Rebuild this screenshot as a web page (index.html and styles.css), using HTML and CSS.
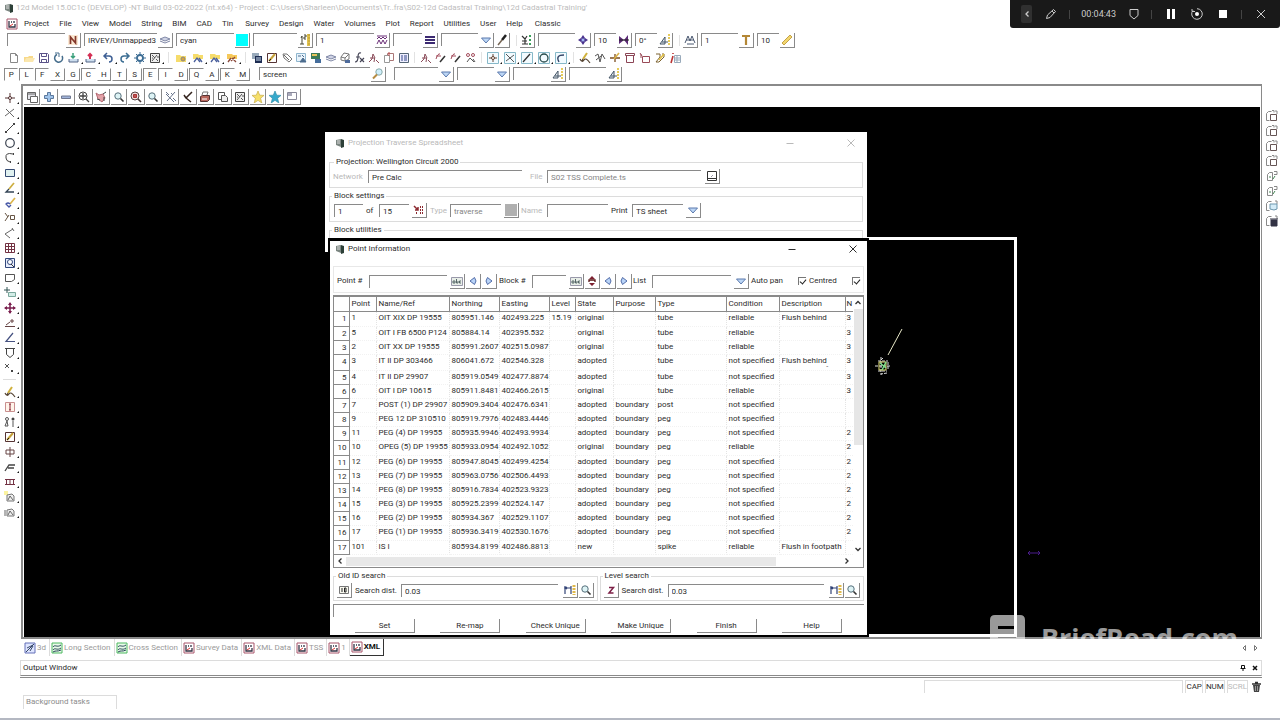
FILE: index.html
```html
<!DOCTYPE html>
<html lang="en">
<head>
  <meta charset="UTF-8" />
  <meta name="viewport" content="width=device-width, initial-scale=1.0" />
  <title>12d Model</title>
  <link rel="stylesheet" href="styles.css">
</head>
<body>

  <!-- icon sprite -->
  <svg class="sprite" aria-hidden="true">
    <symbol id="app" viewBox="0 0 12 12"><path d="M2 3l5-1v8l-5-2z" fill="#7a8580"/><path d="M7 2l3 1v7l-3 1z" fill="#2d4038"/><path d="M3 4l3 0M3 6h3" stroke="#ddd"/></symbol>
    <symbol id="plan" viewBox="0 0 12 12"><path d="M1 1h10v10H1z" fill="#fff" stroke="#a8556b"/><path d="M3 3v6h6V6M5 4h1M8 3v2" fill="none" stroke="#334" stroke-width="1.3"/><path d="M4 8l3-2" stroke="#d33"/></symbol>
    <symbol id="section" viewBox="0 0 12 12"><path d="M1 1h10v10H1z" fill="#e9fbe9" stroke="#4cb860"/><path d="M2 5c2-3 4 1 8-2M2 8c2-3 4 1 8-2M2 10c3-2 4 0 8-2" fill="none" stroke="#245" stroke-width="1"/></symbol>
    <symbol id="threed" viewBox="0 0 12 12"><path d="M1 1h10v10H1z" fill="#dfe6ff" stroke="#6470b8"/><path d="M2 10l8-8M3 6l6-3M6 9l3-5" stroke="#346"/></symbol>
    <symbol id="new" viewBox="0 0 12 12"><path d="M2.500 1.500h5l2 2v7h-7z" fill="#fff" stroke="#888"/><path d="M7.500 1.500v2h2" fill="none" stroke="#888"/></symbol>
    <symbol id="open" viewBox="0 0 12 12"><path d="M1 5h4l1-1h4v6H1z" fill="#f7d98a"/><path d="M1 10l2-4h9l-2 4z" fill="#fbe7ae"/></symbol>
    <symbol id="save" viewBox="0 0 12 12"><path d="M1.500 1.500h8l1 1v8h-9z" fill="#fff" stroke="#5a5288"/><path d="M3.500 1.500v3h5v-3M3.500 10.500v-3h5v3" fill="none" stroke="#5a5288"/></symbol>
    <symbol id="refresh" viewBox="0 0 12 12"><path d="M4 2.500a4 4 0 1 0 5 1.500" fill="none" stroke="#456d8c" stroke-width="1.500"/><path d="M2 1h4v4" fill="none" stroke="#456d8c"/></symbol>
    <symbol id="import" viewBox="0 0 12 12"><path d="M5 1v5M3 4l2 2 2-2" fill="none" stroke="#3ba07c" stroke-width="1.500"/><path d="M1 7v3h9V7" fill="#cde" stroke="#568"/></symbol>
    <symbol id="export" viewBox="0 0 12 12"><path d="M5 7V2M3 4l2-2 2 2" fill="none" stroke="#d42f55" stroke-width="2"/><path d="M1 7v3h9V7" fill="#cde" stroke="#568"/></symbol>
    <symbol id="undo" viewBox="0 0 12 12"><path d="M2 4h5q3 0 3 3t-3 3M5 1L2 4l3 3" fill="none" stroke="#3d5f94" stroke-width="1.500"/></symbol>
    <symbol id="redo" viewBox="0 0 12 12"><path d="M10 4H5Q2 4 2 7t3 3M7 1l3 3-3 3" fill="none" stroke="#3d6f94" stroke-width="1.500"/></symbol>
    <symbol id="gear" viewBox="0 0 12 12"><circle cx="6" cy="6" r="3" fill="none" stroke="#3d6d94" stroke-width="1.800"/><path d="M6 0v3M6 9v3M0 6h3M9 6h3M2 2l2 2M8 8l2 2M10 2L8 4M4 8l-2 2" stroke="#3d6d94"/></symbol>
    <symbol id="image" viewBox="0 0 12 12"><path d="M1.500 1.500h9v9h-9z" fill="#eee" stroke="#444"/><path d="M3 3l3 3M8 3L3 9M7 7l2 2M8 5h2M3 6h1" stroke="#555"/></symbol>
    <symbol id="folder" viewBox="0 0 12 12"><path d="M1 3h4l1 1h5v6H1z" fill="#f6dc6b"/><circle cx="8" cy="7" r="2" fill="#d9a33c" stroke="#888"/></symbol>
    <symbol id="folderx" viewBox="0 0 12 12"><path d="M1 2h5l1 1h4v4H1z" fill="#f6dc6b"/><path d="M2 10l3-4 3 4M7 6l3 4" fill="none" stroke="#4a5f9c" stroke-width="1.300"/></symbol>
    <symbol id="foldery" viewBox="0 0 12 12"><path d="M1 2h5l1 1h4v4H1z" fill="#f6c95b"/><path d="M2 10l3-4M6 6l4 4M5 9l4-4" stroke="#8b4a3c" stroke-width="1.300"/></symbol>
    <symbol id="panel" viewBox="0 0 12 12"><path d="M1 1h7v6H1z" fill="#9ab"/><path d="M4 4h7v7H4z" fill="#1d2c52"/><path d="M5 6h5M5 8h5" stroke="#cde"/></symbol>
    <symbol id="note" viewBox="0 0 12 12"><path d="M1.500 1.500h9v9h-9z" fill="#fff" stroke="#533"/><path d="M3 9l6-7" stroke="#c5a13a" stroke-width="2"/><path d="M3 9l2-2" stroke="#222"/></symbol>
    <symbol id="tag" viewBox="0 0 12 12"><path d="M2 2l4 0 5 5-3 3-5-4z" fill="#fff" stroke="#777"/><path d="M3 3l5 5" stroke="#666"/></symbol>
    <symbol id="mapa" viewBox="0 0 12 12"><path d="M1.500 1.500h9v8h-9z" fill="#e8f3fb" stroke="#8fb6cf"/><path d="M3 4h3M7 3l2 2M5 10l3-4 3 4z" fill="#4d6c8e" stroke="#4d6c8e"/></symbol>
    <symbol id="mapb" viewBox="0 0 12 12"><path d="M1 1h9v6H1z" fill="#3c7b58"/><path d="M2 3h5" stroke="#e8c45a" stroke-width="2"/><path d="M5 7h6v4H5z" fill="#456d9c"/></symbol>
    <symbol id="layers" viewBox="0 0 12 12"><path d="M1 5l5-2 5 2-5 2z" fill="#d0d4e6" stroke="#8088a6"/><path d="M1 7l5 2 5-2" fill="none" stroke="#8088a6"/></symbol>
    <symbol id="cubes" viewBox="0 0 12 12"><path d="M2 5l3-4 5 1v5l-4 2-4-1z" fill="#fff" stroke="#777"/><path d="M2 5l4 1 4-4M6 6v3" stroke="#777" fill="none"/><path d="M6 8h5v3H6z" fill="#4f6c9c"/></symbol>
    <symbol id="fx" viewBox="0 0 12 12"><path d="M7 1q-3-1-3 4t-3 5M2 5h4M6 6l4 4M10 6l-4 4" fill="none" stroke="#445" stroke-width="1.200"/></symbol>
    <symbol id="fr" viewBox="0 0 12 12"><path d="M1 10Q5 8 5 2q3 3 1 8M2 6h5M8 8l3 3" fill="none" stroke="#8a4a58"/></symbol>
    <symbol id="frpen" viewBox="0 0 12 12"><path d="M1 7q2-6 4-5M1 4h5" fill="none" stroke="#a34c5c"/><path d="M5 10l5-6" stroke="#333" stroke-width="1.500"/></symbol>
    <symbol id="glasses" viewBox="0 0 12 12"><circle cx="3" cy="3" r="1.500" fill="none" stroke="#a34c5c"/><circle cx="8" cy="3" r="1.500" fill="none" stroke="#a34c5c"/><path d="M2 10l3-4 4 4M8 7l2 3" fill="none" stroke="#555"/></symbol>
    <symbol id="copy" viewBox="0 0 12 12"><path d="M4.500 1.500h6v7h-6z" fill="#fff" stroke="#a77"/><path d="M1.500 3.500h5v7h-5z" fill="#fff" stroke="#999"/><path d="M6 0v4" stroke="#b44"/></symbol>
    <symbol id="list" viewBox="0 0 12 12"><path d="M1.500 1.500h9v9h-9z" fill="#eef" stroke="#567"/><path d="M3 4h2M6 4h3M3 6h2M6 6h3M3 8h2M6 8h3" stroke="#348"/></symbol>
    <symbol id="ptbox" viewBox="0 0 12 12"><path d="M.5.5h11v11H.5z" fill="#f3fbff" stroke="#86b8c8"/><path d="M6 2v8M2 6h8" stroke="#643"/><circle cx="6" cy="6" r="1.500" fill="#fff" stroke="#643"/></symbol>
    <symbol id="xbox" viewBox="0 0 12 12"><path d="M.5.5h11v11H.5z" fill="#f3fbff" stroke="#86b8c8"/><path d="M2 2l8 8M2 9l8-6" stroke="#555"/></symbol>
    <symbol id="linebox" viewBox="0 0 12 12"><path d="M.5.5h11v11H.5z" fill="#f3fbff" stroke="#86b8c8"/><path d="M2 10l7-8" stroke="#333" stroke-width="1.300"/></symbol>
    <symbol id="circbox" viewBox="0 0 12 12"><path d="M.5.5h11v11H.5z" fill="#f3fbff" stroke="#86b8c8"/><circle cx="6" cy="6" r="4" fill="none" stroke="#264a4a" stroke-width="1.300"/></symbol>
    <symbol id="arcbox" viewBox="0 0 12 12"><path d="M.5.5h11v11H.5z" fill="#f3fbff" stroke="#86b8c8"/><path d="M4 10Q0 3 9 3" fill="none" stroke="#346" stroke-width="1.300"/></symbol>
    <symbol id="pencil" viewBox="0 0 12 12"><path d="M8 1L4 7" stroke="#d0b13c" stroke-width="2"/><path d="M1 7q2 4 4 1t6 3M4 7l-1 2" fill="none" stroke="#543" stroke-width="1.200"/></symbol>
    <symbol id="peaks" viewBox="0 0 12 12"><path d="M1 4l3-2 2 8 2-8 3 5M2 8l5-4" fill="none" stroke="#555"/></symbol>
    <symbol id="spark" viewBox="0 0 12 12"><path d="M6 2v8M1 6h10" stroke="#7a4c20" stroke-width="1.300"/><path d="M10 1L5 7" stroke="#dcb347" stroke-width="1.600"/></symbol>
    <symbol id="bin" viewBox="0 0 12 12"><path d="M1.500 1.500h9v2h-9zM2.500 3.500h7v7h-7z" fill="#fff" stroke="#8b4455"/></symbol>
    <symbol id="boxb" viewBox="0 0 12 12"><path d="M3.500 4.500h7v6h-7zM3 4L1 1M2 6V2" fill="#fff" stroke="#9a4b58"/></symbol>
    <symbol id="chain" viewBox="0 0 12 12"><path d="M2 2h4v3L2 10h3l5-5V2H8" fill="none" stroke="#7c6230"/><path d="M10 2L5 8" stroke="#e2bf3e" stroke-width="1.500"/></symbol>
    <symbol id="italic" viewBox="0 0 12 12"><path d="M4 1v1M4 4L2 11" stroke="#b33" stroke-width="1.600"/><path d="M5.500 3.500h6v7h-6zM5 6h6M5 8h6M8 3v8" fill="none" stroke="#9ab"/></symbol>
    <symbol id="ruler" viewBox="0 0 12 12"><path d="M9.500 0v12" stroke="#e0c24e" stroke-width="3"/><path d="M9 1h2M9 4h2M9 7h2M9 10h2" stroke="#b93"/><path d="M2 4l1-2v8M1 10h4M5 1h2v2H5v2h2" fill="none" stroke="#443"/></symbol>
    <symbol id="angle" viewBox="0 0 12 12"><path d="M10 0v12" stroke="#e6cb5a" stroke-width="2" stroke-dasharray="2 1"/><path d="M1 10l5-7v7zM3 8h6" fill="#e3e9ee" stroke="#456"/></symbol>
    <symbol id="measure" viewBox="0 0 12 12"><path d="M10 1v10" stroke="#e0b94b" stroke-width="3" stroke-dasharray="2 1"/><path d="M1 2v8M1 4h6M7 2v8M3 3L1 4l2 1" fill="none" stroke="#347" stroke-width="1.200"/></symbol>
    <symbol id="zigzag" viewBox="0 0 12 12"><path d="M1 2h10M1 5l2-2 2 2 2-2 2 2 2-2M1 10l2-4 2 4 2-4 2 4 2-4" fill="none" stroke="#6b2f78"/></symbol>
    <symbol id="lines" viewBox="0 0 12 12"><path d="M1 3h10M1 6h10M1 9h10" stroke="#3c2a72" stroke-width="2"/></symbol>
    <symbol id="down" viewBox="0 0 12 12"><path d="M1.500 4h9L6 9z" fill="#bcd6f5" stroke="#5b79ad"/></symbol>
    <symbol id="brush" viewBox="0 0 12 12"><path d="M10 1L6 6" stroke="#222" stroke-width="2.500"/><path d="M6 6l-4 5" stroke="#765" stroke-width="1.500"/></symbol>
    <symbol id="tree" viewBox="0 0 12 12"><path d="M1 2l3 3 2-3M4 5v5M1 10h6M1 7h5" fill="none" stroke="#333" stroke-width="1.200"/><path d="M9 1v2M9 5v2M9 9v2" stroke="#3aa05a" stroke-width="2"/></symbol>
    <symbol id="pin" viewBox="0 0 12 12"><path d="M6 1l2 3H4zM1 6l3-2v4zM11 6L8 4v4zM6 11l2-3H4z" fill="#4c3390"/><circle cx="6" cy="6" r="2" fill="#a2b7f5" stroke="#43308a"/></symbol>
    <symbol id="fan" viewBox="0 0 12 12"><path d="M6 6L1 2v8zM6 6l4-5v10z" fill="#5d2b78"/><path d="M1 6h10" stroke="#222"/></symbol>
    <symbol id="scale" viewBox="0 0 12 12"><path d="M1 9l3-7 2 5 2-5 3 7M2 6h8M3 10h7" fill="none" stroke="#4a5870"/></symbol>
    <symbol id="tee" viewBox="0 0 12 12"><path d="M2 2h8M6 2v9" stroke="#b48735" stroke-width="2.200"/></symbol>
    <symbol id="rule" viewBox="0 0 12 12"><path d="M1 9l8-8 2 2-8 8z" fill="#f2d66d" stroke="#c4a24a"/></symbol>
    <symbol id="n" viewBox="0 0 12 12"><path d="M1 1h10v10H1z" fill="#fbe9d4"/><path d="M3.500 10V3l5 6V2" fill="none" stroke="#84372a" stroke-width="1.700"/></symbol>
    <symbol id="cyan" viewBox="0 0 12 12"><path d="M0 0h12v12H0z" fill="#0ff"/></symbol>
    <symbol id="search" viewBox="0 0 12 12"><circle cx="5" cy="5" r="3.200" fill="#ddf3f5" stroke="#57707c"/><path d="M7.500 7.500l3 3" stroke="#333" stroke-width="1.600"/></symbol>
    <symbol id="find" viewBox="0 0 12 12"><circle cx="7" cy="4" r="3.200" fill="#cfeefa" stroke="#8aa"/><path d="M5 6.500l-4 4" stroke="#b58b42" stroke-width="2"/></symbol>
    <symbol id="windows" viewBox="0 0 12 12"><path d="M1.500 1.500h8v7h-8z" fill="#e4e4ea" stroke="#666"/><path d="M4.500 5.500h7v6h-7z" fill="#fff" stroke="#666"/><path d="M1 3h9" stroke="#666"/></symbol>
    <symbol id="pages" viewBox="0 0 12 12"><path d="M1.500 1.500h6v7h-6z" fill="#fff" stroke="#555"/><path d="M4.500 4.500h4l2 2v4h-6z" fill="#eee" stroke="#555"/></symbol>
    <symbol id="plus" viewBox="0 0 12 12"><path d="M4.500 1.500h3v3h3v3h-3v3h-3v-3h-3v-3h3z" fill="#9fc3ea" stroke="#5b789c"/></symbol>
    <symbol id="minus" viewBox="0 0 12 12"><path d="M1.500 5h9v2.500h-9z" fill="#9fb3da" stroke="#6f7890"/></symbol>
    <symbol id="zoomfit" viewBox="0 0 12 12"><circle cx="5" cy="5" r="4" fill="#fff" stroke="#444"/><path d="M5 2v6M2 5h6M8 8l3 3" stroke="#444" stroke-width="1.300"/></symbol>
    <symbol id="zoomred" viewBox="0 0 12 12"><circle cx="5" cy="5" r="4" fill="#f4dede" stroke="#544"/><path d="M3.500 3.500h3v3h-3z" fill="#b55" stroke="#a33"/><path d="M8 8l3 3" stroke="#433" stroke-width="1.600"/></symbol>
    <symbol id="hand" viewBox="0 0 12 12"><path d="M1 2l3 2 4-1 2 4-3 4-4-3z" fill="#e3a2a8" stroke="#b56a73"/><path d="M8 3l3-2M2 8l3 1M9 6v4" stroke="#444"/></symbol>
    <symbol id="hatch" viewBox="0 0 12 12"><path d="M1 3l8 8M10 1L2 10M1 1l3 3M8 7l3 3M6 2l2 2" stroke="#66728a"/></symbol>
    <symbol id="check" viewBox="0 0 12 12"><path d="M10 1L4 7l5 4M4 7L2 4" fill="none" stroke="#33231d" stroke-width="1.500"/></symbol>
    <symbol id="print" viewBox="0 0 12 12"><path d="M3 4l1-3h5l-1 3" fill="#fff" stroke="#777"/><path d="M1.500 5.500l2-1h7v4l-2 2h-7z" fill="#b8665c" stroke="#533"/><path d="M3 8h5" stroke="#fff"/></symbol>
    <symbol id="star" viewBox="0 0 12 12"><path d="M6 0l1.700 4.200 4.300.2-3.400 2.800L9.800 12 6 9.300 2.200 12l1.200-4.800L0 4.400l4.300-.2z"/></symbol>
    <symbol id="small" viewBox="0 0 12 12"><path d="M1.500 1.500h9v7h-9z" fill="#fff" stroke="#889"/><path d="M2 2h4v3H2z" fill="#aab"/></symbol>
    <symbol id="point" viewBox="0 0 12 12"><path d="M6 1v10M1 6h10" stroke="#533"/><circle cx="6" cy="6" r="1.500" fill="#fff" stroke="#533"/></symbol>
    <symbol id="cross" viewBox="0 0 12 12"><path d="M2 2l8 8M1 9l9-7" stroke="#666"/></symbol>
    <symbol id="seg" viewBox="0 0 12 12"><path d="M2 10l8-8" stroke="#444"/><path d="M1 9h2v2H1zM9 1h2v2H9z" fill="#444"/></symbol>
    <symbol id="circle" viewBox="0 0 12 12"><circle cx="6" cy="6" r="4.300" fill="none" stroke="#3b4350" stroke-width="1.200"/></symbol>
    <symbol id="arc" viewBox="0 0 12 12"><path d="M9 2Q1 0 2 6q0 3 4 4" fill="none" stroke="#444"/><path d="M9 1h1v2H9zM6 9h1v2H6z" fill="#444"/></symbol>
    <symbol id="rect" viewBox="0 0 12 12"><path d="M1.500 2.500h9v7h-9z" fill="#e0f1f0" stroke="#354b73"/></symbol>
    <symbol id="draw" viewBox="0 0 12 12"><path d="M10 1L5 7" stroke="#cdae3f" stroke-width="1.700"/><path d="M5 7l-3 3h8" fill="none" stroke="#345" stroke-width="1.300"/></symbol>
    <symbol id="paint" viewBox="0 0 12 12"><path d="M11 1L6 7" stroke="#dcb54a" stroke-width="1.700"/><path d="M6 7q-2-2-4 0l3 3 2-2" fill="none" stroke="#4657a6" stroke-width="1.300"/></symbol>
    <symbol id="label" viewBox="0 0 12 12"><path d="M1 1l3 4M1 9l4-6M6.500 3.500h4v4h-4z" fill="none" stroke="#654"/></symbol>
    <symbol id="dim" viewBox="0 0 12 12"><path d="M1 7l8-5M1 7l5 4M8 1l2 3" fill="none" stroke="#666"/></symbol>
    <symbol id="grid" viewBox="0 0 12 12"><path d="M1.500 1.500h9v9h-9zM1 4.500h10M1 7.500h10M4.500 1v10M7.500 1v10" fill="#fff" stroke="#733243"/></symbol>
    <symbol id="zoomwin" viewBox="0 0 12 12"><path d="M1.500 1.500h9v9h-9z" fill="#e7edfc" stroke="#33487c"/><circle cx="6" cy="5" r="2.500" fill="#fff" stroke="#33487c"/><path d="M7 7l3 3" stroke="#333"/></symbol>
    <symbol id="poly" viewBox="0 0 12 12"><path d="M1.500 2.500h9v5l-3 2h-6z" fill="#fff" stroke="#555"/></symbol>
    <symbol id="addbox" viewBox="0 0 12 12"><path d="M3 0v6M0 3h6" stroke="#355"/><path d="M4.500 5.500h7v4h-7z" fill="#d3ede7" stroke="#7aa79c"/></symbol>
    <symbol id="move" viewBox="0 0 12 12"><path d="M6 1v10M1 6h10" stroke="#7a1f4e" stroke-width="1.500"/><path d="M6 0l2 3H4zM6 12l2-3H4zM0 6l3-2v4zM12 6L9 4v4z" fill="#7a1f4e"/></symbol>
    <symbol id="slope" viewBox="0 0 12 12"><path d="M1 9.500h10M2 8l4-3M8 2v4M6 4h4" stroke="#644"/></symbol>
    <symbol id="angle2" viewBox="0 0 12 12"><path d="M9 1L2 9.500h9" fill="none" stroke="#455180" stroke-width="1.200"/></symbol>
    <symbol id="tagdown" viewBox="0 0 12 12"><path d="M2.500 1.500h7v6L6 10.500 2.500 7.500z" fill="#fff" stroke="#444"/><path d="M1 1.500h10" stroke="#444"/></symbol>
    <symbol id="nodes" viewBox="0 0 12 12"><path d="M1 2l4 4M5 2L1 6" stroke="#555"/><path d="M7 8h2v2H7z" fill="#444"/></symbol>
    <symbol id="info" viewBox="0 0 12 12"><path d="M1.500 1.500h9v9h-9z" fill="#fff4ea" stroke="#c98f8f"/><path d="M6 3v6M5 3h2M5 9h2" stroke="#823" /></symbol>
    <symbol id="pegs" viewBox="0 0 12 12"><circle cx="3" cy="3" r="1.500" fill="none" stroke="#555"/><circle cx="9" cy="3" r="1.500" fill="#444"/><path d="M3 5L1 10h3zM9 5v6" fill="none" stroke="#555"/></symbol>
    <symbol id="align" viewBox="0 0 12 12"><path d="M6 1v10M2 4h8v4H2z" fill="none" stroke="#644"/></symbol>
    <symbol id="step" viewBox="0 0 12 12"><path d="M1 10l4-6h6M4 7h6" fill="none" stroke="#444" stroke-width="1.300"/></symbol>
    <symbol id="rail" viewBox="0 0 12 12"><path d="M1 3.500h10M1 8.500h10M2.500 3v6M6 3v6M9.500 3v6" stroke="#733243"/></symbol>
    <symbol id="sheet" viewBox="0 0 12 12"><path d="M3 4l5-1 2 2v5H3z" fill="#eee" stroke="#777"/><path d="M4 9l2-4 3 4M1 4v6" fill="none" stroke="#666"/></symbol>
    <symbol id="sheety" viewBox="0 0 12 12"><path d="M0 0h4v4H0z" fill="#fbf3a0"/><path d="M3 4l5-1 2 2v5H3z" fill="#eee" stroke="#777"/><path d="M4 9l2-4 3 4" fill="none" stroke="#666"/></symbol>
    <symbol id="docs" viewBox="0 0 12 12"><path d="M3.500 10.500h-3v-7l2-2h3M6 .5h2v2M9 1h2v3" fill="none" stroke="#888"/><path d="M4.500 4.500h6v6h-6z" fill="#fff" stroke="#655"/></symbol>
    <symbol id="docg" viewBox="0 0 12 12"><path d="M1.500 10.500v-6l2-2h3v8zM8 1.500h3v3H8" fill="none" stroke="#888"/><path d="M3 7h2M9 6l-2 3" stroke="#485"/></symbol>
    <symbol id="docb" viewBox="0 0 12 12"><path d="M3.500 10.500h-3v-7l2-2h3M9 1h2v3" fill="none" stroke="#888"/><path d="M4 4h7v5l-3 1-4-1z" fill="#d4ecf8" stroke="#6d97ae"/></symbol>
    <symbol id="doct" viewBox="0 0 12 12"><path d="M3.500 10.500h-3v-7l2-2h3M9 1h2v3" fill="none" stroke="#888"/><path d="M5 5h6v6H5zM4 4h8" fill="#334" stroke="#334"/></symbol>
    <symbol id="abc" viewBox="0 0 12 12"><path d="M.5 2.500h11v8H.5z" fill="#e8eee8" stroke="#99a"/><path d="M2 8V6h2v2zM5.500 4v4h1.500V6M10 6H8.500v2H10" fill="none" stroke="#566"/></symbol>
    <symbol id="prev" viewBox="0 0 12 12"><path d="M7.500 2.500L3 6l4.500 3.500L9 6z" fill="#b9d4f8" stroke="#526ca8"/></symbol>
    <symbol id="next" viewBox="0 0 12 12"><path d="M4.500 2.500L9 6 4.500 9.500 3 6z" fill="#b9d4f8" stroke="#526ca8"/></symbol>
    <symbol id="spin" viewBox="0 0 12 12"><path d="M6 1l3 3H3zM6 11l3-3H3z" fill="#7d2030"/><path d="M3 7V5h6v2" fill="none" stroke="#511" stroke-width="1.300"/></symbol>
    <symbol id="pick" viewBox="0 0 12 12"><path d="M1 2l4 4M2 6h3V3" fill="none" stroke="#8c2a30" stroke-width="1.500"/><path d="M7 3h3M7 6h3M7 9h3M3 9h2" stroke="#8c2a30" stroke-width="2" stroke-dasharray="1 1"/></symbol>
    <symbol id="disk" viewBox="0 0 12 12"><path d="M1.500 1.500h9v9h-9zM2 8.500h8" fill="#fff" stroke="#333"/><path d="M5 7l2-2" stroke="#99a"/></symbol>
    <symbol id="grey" viewBox="0 0 12 12"><path d="M0 0h12v12H0z" fill="#b0b0b0"/></symbol>
    <symbol id="id" viewBox="0 0 12 12"><path d="M1.500 2.500h9v7h-9z" fill="#fafaf0" stroke="#777"/><path d="M4 4v4M6.500 4v4h1.500V4z" fill="none" stroke="#222"/></symbol>
    <symbol id="z" viewBox="0 0 12 12"><path d="M4 3.500h4.500L4 9h4.500" fill="none" stroke="#7d2047" stroke-width="1.500"/></symbol>
    <symbol id="close" viewBox="0 0 12 12"><path d="M2.500 2.500l7 7M9.500 2.500l-7 7" stroke="currentColor"/></symbol>
    <symbol id="min" viewBox="0 0 12 12"><path d="M2.500 6.500h7" stroke="currentColor"/></symbol>
    <symbol id="left" viewBox="0 0 12 12"><path d="M7.500 3.500L5 6l2.500 2.500" fill="none" stroke="currentColor" stroke-width="1.300"/></symbol>
    <symbol id="right" viewBox="0 0 12 12"><path d="M4.500 3.500L7 6 4.500 8.500" fill="none" stroke="currentColor" stroke-width="1.300"/></symbol>
    <symbol id="up" viewBox="0 0 12 12"><path d="M3.500 7L6 4.500 8.500 7" fill="none" stroke="currentColor" stroke-width="1.300"/></symbol>
    <symbol id="dn" viewBox="0 0 12 12"><path d="M3.500 5L6 7.500 8.500 5" fill="none" stroke="currentColor" stroke-width="1.300"/></symbol>
    <symbol id="tril" viewBox="0 0 12 12"><path d="M7.500 3.500v5L5 6z" fill="none" stroke="#777"/></symbol>
    <symbol id="trir" viewBox="0 0 12 12"><path d="M4.500 3.500v5L7 6z" fill="none" stroke="#777"/></symbol>
    <symbol id="tack" viewBox="0 0 12 12"><path d="M4.500 3.500h3v3h-3zM3.500 6.500h5M6 7v2" fill="none" stroke="#111"/></symbol>
    <symbol id="shut" viewBox="0 0 12 12"><path d="M4 4l4 4M8 4L4 8" stroke="#111" stroke-width="1.500"/></symbol>
    <symbol id="trash" viewBox="0 0 12 12"><path d="M3 4h7l-1 7H4z" fill="#444"/><path d="M2 3h9M5 1.500h3" stroke="#333" stroke-width="1.300"/><path d="M5.500 5v5M7.500 5v5" stroke="#999"/></symbol>
  </svg>

  <header class="titlebar">
    <svg class="icon"><use href="#app"/></svg>
    <span>12d Model 15.0C1c (DEVELOP) -NT Build 03-02-2022 (nt.x64) - Project : C:\Users\Sharleen\Documents\Tr..fra\S02-12d Cadastral Training\12d Cadastral Training'</span>
  </header>

  <nav class="menu">
    <svg class="icon"><use href="#plan"/></svg>
    <button>Project</button><button>File</button><button>View</button><button>Model</button><button>String</button><button>BIM</button><button>CAD</button><button>Tin</button>
    <button class="split">Survey</button><button>Design</button><button>Water</button><button>Volumes</button><button>Plot</button><button>Report</button><button>Utilities</button><button>User</button><button>Help</button>
    <button class="split">Classic</button>
  </nav>

  <div class="toolbar fields">
    <div class="pair"><input class="w-l" aria-label="Name"><button class="btn" aria-label="Names"><svg class="icon"><use href="#n"/></svg></button></div>
    <div class="pair"><input class="w-xl" value="IRVEY/Unmapped3" aria-label="Model"><button class="btn" aria-label="Models"><svg class="icon"><use href="#layers"/></svg></button></div>
    <div class="pair"><input class="w-l" value="cyan" aria-label="Colour"><button class="btn" aria-label="Colours"><svg class="icon"><use href="#cyan"/></svg></button></div>
    <div class="pair"><input class="w-m" aria-label="Height"><button class="btn" aria-label="Heights"><svg class="icon"><use href="#ruler"/></svg></button></div>
    <div class="pair"><input class="w-l" value="1" aria-label="Linestyle"><button class="btn" aria-label="Linestyles"><svg class="icon"><use href="#zigzag"/></svg></button></div>
    <div class="pair"><input class="w-s" aria-label="Weight"><button class="btn" aria-label="Weights"><svg class="icon"><use href="#lines"/></svg></button></div>
    <div class="pair"><input class="w-n" aria-label="Tinable"><button class="btn" aria-label="Tinable list"><svg class="icon"><use href="#down"/></svg></button><button class="btn" aria-label="Brush"><svg class="icon"><use href="#brush"/></svg></button></div>
    <span class="sep"></span>
    <div class="pair"><button class="btn" aria-label="Symbol"><svg class="icon"><use href="#tree"/></svg></button></div>
    <div class="pair"><input class="w-n" aria-label="Symbol name"><button class="btn" aria-label="Symbols"><svg class="icon"><use href="#pin"/></svg></button></div>
    <div class="pair"><input class="w-xs" value="10" aria-label="Size"><button class="btn" aria-label="Sizes"><svg class="icon"><use href="#fan"/></svg></button></div>
    <div class="pair"><input class="w-xs" value="0°" aria-label="Angle"><button class="btn" aria-label="Angles"><svg class="icon"><use href="#angle"/></svg></button></div>
    <span class="sep"></span>
    <div class="pair"><button class="btn" aria-label="Text"><svg class="icon"><use href="#scale"/></svg></button></div>
    <div class="pair"><input class="w-n" value="1" aria-label="Textstyle"><button class="btn" aria-label="Textstyles"><svg class="icon"><use href="#tee"/></svg></button></div>
    <div class="pair"><input class="w-xs" value="10" aria-label="Text size"><button class="btn" aria-label="Text sizes"><svg class="icon"><use href="#rule"/></svg></button></div>
  </div>

  <div class="toolbar tools">
    <button class="tool"><svg class="icon"><use href="#new"/></svg></button>
    <button class="tool"><svg class="icon"><use href="#open"/></svg></button>
    <button class="tool"><svg class="icon"><use href="#save"/></svg></button>
    <button class="tool"><svg class="icon"><use href="#refresh"/></svg></button>
    <button class="tool more"><svg class="icon"><use href="#import"/></svg></button>
    <button class="tool more"><svg class="icon"><use href="#export"/></svg></button>
    <button class="tool more"><svg class="icon"><use href="#undo"/></svg></button>
    <button class="tool"><svg class="icon"><use href="#redo"/></svg></button>
    <button class="tool"><svg class="icon"><use href="#gear"/></svg></button>
    <button class="tool more"><svg class="icon"><use href="#image"/></svg></button>
    <span class="sep"></span>
    <button class="tool more"><svg class="icon"><use href="#folder"/></svg></button>
    <button class="tool more"><svg class="icon"><use href="#folderx"/></svg></button>
    <button class="tool more"><svg class="icon"><use href="#folderx"/></svg></button>
    <button class="tool more"><svg class="icon"><use href="#foldery"/></svg></button>
    <span class="sep"></span>
    <div class="tool-run">
      <button class="tool"><svg class="icon"><use href="#panel"/></svg></button>
      <button class="tool"><svg class="icon"><use href="#note"/></svg></button>
      <button class="tool"><svg class="icon"><use href="#tag"/></svg></button>
      <button class="tool"><svg class="icon"><use href="#mapa"/></svg></button>
      <button class="tool"><svg class="icon"><use href="#mapb"/></svg></button>
      <button class="tool"><svg class="icon"><use href="#layers"/></svg></button>
      <button class="tool"><svg class="icon"><use href="#cubes"/></svg></button>
      <button class="tool"><svg class="icon"><use href="#fx"/></svg></button>
      <button class="tool"><svg class="icon"><use href="#fr"/></svg></button>
      <button class="tool"><svg class="icon"><use href="#copy"/></svg></button>
      <button class="tool"><svg class="icon"><use href="#list"/></svg></button>
    </div>
    <span class="sep"></span>
    <button class="tool"><svg class="icon"><use href="#fr"/></svg></button>
    <button class="tool"><svg class="icon"><use href="#frpen"/></svg></button>
    <button class="tool"><svg class="icon"><use href="#frpen"/></svg></button>
    <button class="tool"><svg class="icon"><use href="#glasses"/></svg></button>
    <span class="sep"></span>
    <button class="tool more"><svg class="icon"><use href="#ptbox"/></svg></button>
    <button class="tool more"><svg class="icon"><use href="#xbox"/></svg></button>
    <button class="tool more"><svg class="icon"><use href="#linebox"/></svg></button>
    <button class="tool more"><svg class="icon"><use href="#circbox"/></svg></button>
    <button class="tool more"><svg class="icon"><use href="#arcbox"/></svg></button>
    <span class="sep"></span>
    <button class="tool"><svg class="icon"><use href="#pencil"/></svg></button>
    <button class="tool"><svg class="icon"><use href="#peaks"/></svg></button>
    <button class="tool"><svg class="icon"><use href="#spark"/></svg></button>
    <button class="tool"><svg class="icon"><use href="#bin"/></svg></button>
    <button class="tool"><svg class="icon"><use href="#boxb"/></svg></button>
    <button class="tool"><svg class="icon"><use href="#chain"/></svg></button>
    <button class="tool"><svg class="icon"><use href="#italic"/></svg></button>
  </div>

  <div class="toolbar snaps">
    <div class="keys">
      <button aria-pressed="true">P</button><button aria-pressed="true">L</button><button aria-pressed="true">F</button><button>X</button><button>G</button><button aria-pressed="true">C</button><button>H</button><button>T</button><button>S</button><button aria-pressed="true">E</button><button aria-pressed="true">I</button><button>D</button><button aria-pressed="true">Q</button><button>A</button><button aria-pressed="true">K</button><button>M</button>
    </div>
    <div class="pair screen"><input value="screen" aria-label="Snap screen"><button class="btn" aria-label="Find"><svg class="icon"><use href="#find"/></svg></button></div>
    <div class="pair"><input class="w-m" aria-label="Snap model"><button class="btn" aria-label="Models"><svg class="icon"><use href="#down"/></svg></button></div>
    <div class="pair"><input class="w-n" aria-label="Snap type"><button class="btn" aria-label="Types"><svg class="icon"><use href="#down"/></svg></button></div>
    <div class="pair"><input class="w-n" aria-label="Distance"><button class="btn" aria-label="Distances"><svg class="icon"><use href="#angle"/></svg></button></div>
    <div class="pair"><input class="w-n" aria-label="Tolerance"><button class="btn" aria-label="Tolerances"><svg class="icon"><use href="#angle"/></svg></button></div>
  </div>

  <main class="main">
    <aside class="rail">
      <button class="tool more"><svg class="icon"><use href="#point"/></svg></button>
      <button class="tool more"><svg class="icon"><use href="#cross"/></svg></button>
      <button class="tool more"><svg class="icon"><use href="#seg"/></svg></button>
      <button class="tool more"><svg class="icon"><use href="#circle"/></svg></button>
      <button class="tool more"><svg class="icon"><use href="#arc"/></svg></button>
      <button class="tool more"><svg class="icon"><use href="#rect"/></svg></button>
      <button class="tool more"><svg class="icon"><use href="#draw"/></svg></button>
      <button class="tool more"><svg class="icon"><use href="#paint"/></svg></button>
      <button class="tool more"><svg class="icon"><use href="#label"/></svg></button>
      <button class="tool more"><svg class="icon"><use href="#dim"/></svg></button>
      <button class="tool more"><svg class="icon"><use href="#grid"/></svg></button>
      <button class="tool more"><svg class="icon"><use href="#zoomwin"/></svg></button>
      <button class="tool more"><svg class="icon"><use href="#poly"/></svg></button>
      <button class="tool more"><svg class="icon"><use href="#addbox"/></svg></button>
      <button class="tool more"><svg class="icon"><use href="#move"/></svg></button>
      <button class="tool more"><svg class="icon"><use href="#slope"/></svg></button>
      <button class="tool more"><svg class="icon"><use href="#angle2"/></svg></button>
      <button class="tool more"><svg class="icon"><use href="#tagdown"/></svg></button>
      <button class="tool more"><svg class="icon"><use href="#nodes"/></svg></button>
      <span class="rule"></span>
      <button class="tool more"><svg class="icon"><use href="#pencil"/></svg></button>
      <button class="tool more"><svg class="icon"><use href="#info"/></svg></button>
      <button class="tool more"><svg class="icon"><use href="#pegs"/></svg></button>
      <button class="tool more"><svg class="icon"><use href="#note"/></svg></button>
      <button class="tool more"><svg class="icon"><use href="#align"/></svg></button>
      <button class="tool more"><svg class="icon"><use href="#step"/></svg></button>
      <button class="tool more"><svg class="icon"><use href="#rail"/></svg></button>
      <button class="tool more"><svg class="icon"><use href="#sheety"/></svg></button>
      <button class="tool more"><svg class="icon"><use href="#sheet"/></svg></button>
    </aside>

    <section class="view">
      <div class="view-tools">
        <button class="btn"><svg class="icon"><use href="#windows"/></svg></button>
        <button class="btn"><svg class="icon"><use href="#plus"/></svg></button>
        <button class="btn"><svg class="icon"><use href="#minus"/></svg></button>
        <button class="btn"><svg class="icon"><use href="#zoomfit"/></svg></button>
        <button class="btn"><svg class="icon"><use href="#hand"/></svg></button>
        <button class="btn"><svg class="icon"><use href="#search"/></svg></button>
        <button class="btn"><svg class="icon"><use href="#zoomred"/></svg></button>
        <button class="btn"><svg class="icon"><use href="#search"/></svg></button>
        <button class="btn"><svg class="icon"><use href="#hatch"/></svg></button>
        <button class="btn"><svg class="icon"><use href="#check"/></svg></button>
        <button class="btn"><svg class="icon"><use href="#print"/></svg></button>
        <button class="btn"><svg class="icon"><use href="#pages"/></svg></button>
        <button class="btn"><svg class="icon"><use href="#image"/></svg></button>
        <button class="btn"><svg class="icon gold"><use href="#star"/></svg></button>
        <button class="btn"><svg class="icon blue"><use href="#star"/></svg></button>
        <button class="btn"><svg class="icon"><use href="#small"/></svg></button>
      </div>

      <div class="canvas">
        <div class="plot-frame"></div>
        <svg class="survey-mark" viewBox="0 0 32 50">
          <path d="M13 27L27 1" stroke="#e8e8c8" stroke-width="1"/>
          <path d="M0 38h15M6 29v18M8 30l-3 3M12 45l-6 1M3 33h10M3 43h9M13 34v8" stroke="#ddd" stroke-width="1" stroke-dasharray="3 1"/>
          <path d="M4 34h7v8H4z" fill="none" stroke="#e7e27a"/>
          <path d="M5 35l6 5M11 34l-4 8" stroke="#7fe08c" stroke-width="1.500"/>
        </svg>
        <svg class="north" viewBox="0 0 14 6"><path d="M1 3h12M3 1L1 3l2 2M11 1l2 2-2 2" fill="none" stroke="#4b1d8c"/></svg>

        <div class="window traverse">
          <div class="window-title">
            <svg class="icon"><use href="#app"/></svg><span>Projection Traverse Spreadsheet</span>
            <button aria-label="Minimise"><svg class="icon"><use href="#min"/></svg></button>
            <button aria-label="Close"><svg class="icon"><use href="#close"/></svg></button>
          </div>
          <fieldset class="wide">
            <legend>Projection: Wellington Circuit 2000</legend>
            <div class="network-row">
              <label class="off" for="network">Network</label><input id="network" value="Pre Calc">
              <label class="off" for="file">File</label><input id="file" class="dim" value="S02 TSS Complete.ts">
              <button class="btn" aria-label="Browse"><svg class="icon"><use href="#disk"/></svg></button>
            </div>
          </fieldset>
          <fieldset>
            <legend>Block settings</legend>
            <div class="block-row">
              <input id="block" value="1" aria-label="Block"><label for="blocks">of</label><input id="blocks" value="15">
              <button class="btn" aria-label="Pick block"><svg class="icon"><use href="#pick"/></svg></button>
              <label class="off" for="type">Type</label><input id="type" class="dim" value="traverse">
              <button class="btn" aria-label="Types"><svg class="icon"><use href="#grey"/></svg></button>
              <label class="off" for="name">Name</label><input id="name">
              <label for="print">Print</label><select id="print"><option>TS sheet</option></select>
              <button class="btn" aria-label="Print list"><svg class="icon"><use href="#down"/></svg></button>
            </div>
          </fieldset>
          <fieldset>
            <legend>Block utilities</legend>
          </fieldset>
        </div>

        <div class="window points">
          <div class="window-title">
            <svg class="icon"><use href="#app"/></svg><span>Point Information</span>
            <button aria-label="Minimise"><svg class="icon"><use href="#min"/></svg></button>
            <button aria-label="Close"><svg class="icon"><use href="#close"/></svg></button>
          </div>

          <div class="filter">
            <label for="point">Point #</label><input id="point">
            <div class="steps">
              <button class="btn" aria-label="Point name"><svg class="icon"><use href="#abc"/></svg></button>
              <button class="btn" aria-label="Previous point"><svg class="icon"><use href="#prev"/></svg></button>
              <button class="btn" aria-label="Next point"><svg class="icon"><use href="#next"/></svg></button>
            </div>
            <label for="blockno">Block #</label><input id="blockno">
            <div class="steps">
              <button class="btn" aria-label="Block number"><svg class="icon"><use href="#abc"/></svg></button>
              <button class="btn" aria-label="Swap"><svg class="icon"><use href="#spin"/></svg></button>
              <button class="btn" aria-label="Previous block"><svg class="icon"><use href="#prev"/></svg></button>
              <button class="btn" aria-label="Next block"><svg class="icon"><use href="#next"/></svg></button>
            </div>
            <label for="list-name">List</label><input id="list-name">
            <div class="steps"><button class="btn" aria-label="Lists"><svg class="icon"><use href="#down"/></svg></button></div>
            <label for="autopan">Auto pan</label><input type="checkbox" id="autopan" checked>
            <label for="centred">Centred</label><input type="checkbox" id="centred" checked>
          </div>

          <div class="sheet">
            <table>
              <colgroup><col class="c-row"><col class="c-point"><col class="c-name"><col class="c-coord"><col class="c-coord"><col class="c-level"><col class="c-state"><col class="c-purpose"><col class="c-type"><col class="c-cond"><col class="c-desc"><col></colgroup>
              <thead>
                <tr><th></th><th>Point</th><th>Name/Ref</th><th>Northing</th><th>Easting</th><th>Level</th><th>State</th><th>Purpose</th><th>Type</th><th>Condition</th><th>Description</th><th>N</th></tr>
              </thead>
              <tbody>
                <tr><th>1</th><td>1</td><td>OIT XIX DP 19555</td><td>805951.146</td><td>402493.225</td><td>15.19</td><td>original</td><td></td><td>tube</td><td>reliable</td><td><div>Flush behind<br>kerb</div></td><td>3</td></tr>
                <tr><th>2</th><td>5</td><td>OIT I FB 6500 P124</td><td>805884.14</td><td>402395.532</td><td></td><td>original</td><td></td><td>tube</td><td>reliable</td><td></td><td>3</td></tr>
                <tr><th>3</th><td>2</td><td>OIT XX DP 19555</td><td>805991.2607</td><td>402515.0987</td><td></td><td>original</td><td></td><td>tube</td><td>reliable</td><td></td><td>3</td></tr>
                <tr><th>4</th><td>3</td><td>IT II DP 303466</td><td>806041.672</td><td>402546.328</td><td></td><td>adopted</td><td></td><td>tube</td><td>not specified</td><td><div>Flush behind<br>kerb 0.08 soft</div></td><td>3</td></tr>
                <tr><th>5</th><td>4</td><td>IT II DP 29907</td><td>805919.0549</td><td>402477.8874</td><td></td><td>adopted</td><td></td><td>tube</td><td>not specified</td><td></td><td>3</td></tr>
                <tr><th>6</th><td>6</td><td>OIT I DP 10615</td><td>805911.8481</td><td>402466.2615</td><td></td><td>original</td><td></td><td>tube</td><td>reliable</td><td></td><td>3</td></tr>
                <tr><th>7</th><td>7</td><td>POST (1) DP 29907</td><td>805909.3404</td><td>402476.6341</td><td></td><td>adopted</td><td>boundary</td><td>post</td><td>not specified</td><td></td><td></td></tr>
                <tr><th>8</th><td>9</td><td>PEG 12 DP 310510</td><td>805919.7976</td><td>402483.4446</td><td></td><td>adopted</td><td>boundary</td><td>peg</td><td>not specified</td><td></td><td></td></tr>
                <tr><th>9</th><td>11</td><td>PEG (4) DP 19955</td><td>805935.9946</td><td>402493.9934</td><td></td><td>adopted</td><td>boundary</td><td>peg</td><td>not specified</td><td></td><td>2</td></tr>
                <tr><th>10</th><td>10</td><td>OPEG (5) DP 19955</td><td>805933.0954</td><td>402492.1052</td><td></td><td>original</td><td>boundary</td><td>peg</td><td>reliable</td><td></td><td>2</td></tr>
                <tr><th>11</th><td>12</td><td>PEG (6) DP 19955</td><td>805947.8045</td><td>402499.4254</td><td></td><td>adopted</td><td>boundary</td><td>peg</td><td>not specified</td><td></td><td>2</td></tr>
                <tr><th>12</th><td>13</td><td>PEG (7) DP 19955</td><td>805963.0756</td><td>402506.4493</td><td></td><td>adopted</td><td>boundary</td><td>peg</td><td>not specified</td><td></td><td>2</td></tr>
                <tr><th>13</th><td>14</td><td>PEG (8) DP 19955</td><td>805916.7834</td><td>402523.9323</td><td></td><td>adopted</td><td>boundary</td><td>peg</td><td>not specified</td><td></td><td>2</td></tr>
                <tr><th>14</th><td>15</td><td>PEG (3) DP 19955</td><td>805925.2399</td><td>402524.147</td><td></td><td>adopted</td><td>boundary</td><td>peg</td><td>not specified</td><td></td><td>2</td></tr>
                <tr><th>15</th><td>16</td><td>PEG (2) DP 19955</td><td>805934.367</td><td>402529.1107</td><td></td><td>adopted</td><td>boundary</td><td>peg</td><td>not specified</td><td></td><td>2</td></tr>
                <tr><th>16</th><td>17</td><td>PEG (1) DP 19955</td><td>805936.3419</td><td>402530.1676</td><td></td><td>adopted</td><td>boundary</td><td>peg</td><td>not specified</td><td></td><td>2</td></tr>
                <tr><th>17</th><td>101</td><td>IS I</td><td>805934.8199</td><td>402486.8813</td><td></td><td>new</td><td></td><td>spike</td><td>reliable</td><td>Flush in footpath</td><td></td></tr>
              </tbody>
            </table>
            <div class="vscroll"><svg class="icon"><use href="#up"/></svg><span></span><svg class="icon"><use href="#dn"/></svg></div>
            <div class="hscroll"><svg class="icon"><use href="#left"/></svg><span></span><svg class="icon"><use href="#right"/></svg></div>
          </div>

          <div class="searches">
            <fieldset>
              <legend>Old ID search</legend>
              <div class="search-row">
                <button class="btn" aria-label="ID"><svg class="icon"><use href="#id"/></svg></button>
                <label for="id-dist">Search dist.</label><input id="id-dist" value="0.03">
                <button class="btn" aria-label="Measure"><svg class="icon"><use href="#measure"/></svg></button>
                <button class="btn" aria-label="Search IDs"><svg class="icon"><use href="#search"/></svg></button>
              </div>
            </fieldset>
            <fieldset>
              <legend>Level search</legend>
              <div class="search-row">
                <button class="btn" aria-label="Level"><svg class="icon"><use href="#z"/></svg></button>
                <label for="level-dist">Search dist.</label><input id="level-dist" value="0.03">
                <button class="btn" aria-label="Measure"><svg class="icon"><use href="#measure"/></svg></button>
                <button class="btn" aria-label="Search levels"><svg class="icon"><use href="#search"/></svg></button>
              </div>
            </fieldset>
          </div>
          <input class="message" aria-label="Message" readonly>
          <div class="actions">
            <button>Set</button><button>Re-map</button><button>Check Unique</button><button>Make Unique</button><button>Finish</button><button>Help</button>
          </div>
        </div>
      </div>
    </section>

    <aside class="rail right">
      <button class="tool"><svg class="icon"><use href="#docs"/></svg></button>
      <button class="tool"><svg class="icon"><use href="#docs"/></svg></button>
      <button class="tool"><svg class="icon"><use href="#docs"/></svg></button>
      <button class="tool"><svg class="icon"><use href="#docs"/></svg></button>
      <button class="tool"><svg class="icon"><use href="#docg"/></svg></button>
      <button class="tool"><svg class="icon"><use href="#docg"/></svg></button>
      <button class="tool"><svg class="icon"><use href="#docb"/></svg></button>
      <button class="tool"><svg class="icon"><use href="#doct"/></svg></button>
    </aside>
  </main>

  <div class="tabs">
    <button><svg class="icon"><use href="#threed"/></svg>3d</button>
    <button><svg class="icon"><use href="#section"/></svg>Long Section</button>
    <button><svg class="icon"><use href="#section"/></svg>Cross Section</button>
    <button><svg class="icon"><use href="#plan"/></svg>Survey Data</button>
    <button><svg class="icon"><use href="#plan"/></svg>XML Data</button>
    <button><svg class="icon"><use href="#plan"/></svg>TSS</button>
    <button><svg class="icon"><use href="#plan"/></svg>1</button>
    <button class="active"><svg class="icon"><use href="#plan"/></svg>XML</button>
    <span class="tab-arrows"><svg class="icon"><use href="#tril"/></svg><svg class="icon"><use href="#trir"/></svg></span>
  </div>

  <section class="output">
    <div class="output-title">
      <span>Output Window</span>
      <svg class="icon"><use href="#tack"/></svg><svg class="icon"><use href="#shut"/></svg>
    </div>
  </section>

  <footer>
    <div class="status">
      <span class="progress"></span><span>CAP</span><span>NUM</span><span class="off">SCRL</span><svg class="icon"><use href="#trash"/></svg>
    </div>
    <div class="tasks">Background tasks</div>
  </footer>

  <div class="recorder">
    <button class="back" aria-label="Collapse"><svg class="icon"><use href="#left"/></svg></button>
    <button aria-label="Draw"><svg viewBox="0 0 12 12"><path d="M1.500 10.500l1-3.500 6-5.500 2 2-5.500 6zM7 3l2 2" fill="none" stroke="#ccc"/></svg></button>
    <i></i>
    <time>00:04:43</time>
    <button aria-label="Marker"><svg viewBox="0 0 12 12"><path d="M2 1.500h8v6l-4 3.500-4-3.500z" fill="none" stroke="#ccc"/></svg></button>
    <i></i>
    <button aria-label="Pause"><svg viewBox="0 0 12 12"><path d="M2 1h3v10H2zM7 1h3v10H7z" fill="#fff"/></svg></button>
    <button aria-label="Restart"><svg viewBox="0 0 12 12"><path d="M2 2.500a5.300 5.300 0 1 0 4-1.800M1 1v2.500h3" fill="none" stroke="#ccc"/><circle cx="6" cy="6" r="2" fill="#fff"/></svg></button>
    <button aria-label="Stop"><svg viewBox="0 0 12 12"><path d="M2 2h8v8H2z" fill="#fff"/></svg></button>
    <i></i>
    <button aria-label="Close"><svg viewBox="0 0 12 12"><path d="M2 2l8 8M10 2l-8 8" stroke="#ccc"/></svg></button>
  </div>

  <div class="watermark">
    <svg viewBox="0 0 35 38"><path fill-rule="evenodd" d="M5 0h25q5 0 5 5v28q0 5-5 5H5q-5 0-5-5V5q0-5 5-5zM8 11h18v3H8zM8 20h18v3H8z" fill="#fff"/></svg>
    <span>BriefRead.com</span>
  </div>

</body>
</html>
```
FILE: styles.css
```css
:root {
  --line: #8a8a8a;
  --soft: #dcdcdc;
  --text: #2c2c2c;
  --off: #b9b9b9;
}

* {
  margin: 0;
  padding: 0;
  box-sizing: border-box;
}

body {
  position: relative;
  min-height: 100vh;
  display: flex;
  flex-direction: column;
  background: #fff;
  color: var(--text);
  font: 8px/12px Roboto, "Open Sans", sans-serif;
  border-bottom: 2px solid #b4b8c2;
  overflow-x: hidden;
}

button,
input,
select {
  font: inherit;
  color: inherit;
  background: none;
  border: 0;
  border-radius: 0;
}

input:not([type="checkbox"]),
select {
  appearance: none;
  min-width: 0;
  height: 13px;
  padding: 1px 0 0 3px;
  border-top: 1px solid var(--line);
  border-left: 1px solid var(--line);
}

.sprite {
  position: absolute;
  width: 0;
  height: 0;
}

.icon {
  display: block;
  flex: none;
  width: 12px;
  height: 12px;
}

.gold { fill: #f6e06a; stroke: #c9ac48; stroke-width: 0.7; overflow: visible; }
.blue { fill: #35a9cc; stroke: #3590ac; stroke-width: 0.7; overflow: visible; }
.off { color: var(--off); }
.dim { color: #858585; }

.btn {
  flex: none;
  display: flex;
  align-items: center;
  justify-content: center;
  width: 15px;
  height: 15px;
  border-right: 1px solid var(--line);
  border-bottom: 1px solid var(--line);
}

.tool {
  position: relative;
  width: 15px;
  height: 15px;
  display: flex;
  align-items: center;
  justify-content: center;
}

.tool.more {
  width: 17px;
  padding-right: 2px;
}

.tool.more::after {
  content: "";
  position: absolute;
  right: 0;
  bottom: 1px;
  border: 1px solid #111;
  border-top-color: transparent;
  border-left-color: transparent;
}

/* top bars */

.titlebar {
  display: flex;
  align-items: center;
  gap: 1px;
  height: 16px;
  padding-left: 3px;
  color: #bdbdbd;
  white-space: nowrap;
}

.menu {
  display: flex;
  align-items: center;
  gap: 10px;
  height: 16px;
  padding-left: 6px;
}

.menu .icon { margin-right: -4px; }
.menu .split { margin-left: 2px; }

.toolbar {
  display: flex;
  align-items: center;
  height: 17px;
}

.fields { padding-left: 7px; }
.tools { padding-left: 6px; }
.snaps { padding-left: 4px; }

.pair {
  display: flex;
  gap: 1px;
  margin-right: 3px;
}

.w-xl { width: 73px; }
.w-l { width: 58px; }
.w-m { width: 44px; }
.w-n { width: 37px; }
.w-s { width: 29px; }
.w-xs { width: 22px; }

.sep {
  width: 1px;
  height: 11px;
  margin: 0 4px;
  background: #e2e2e2;
}

.fields .sep { margin: 0 3px; }

.tool-run {
  display: flex;
  width: 161px;
}

.tool-run .tool { flex: 1; }
.tool-run ~ .sep { margin: 0 3px; }

.keys {
  display: flex;
  gap: 1px;
  width: 246px;
  margin-right: 9px;
}

.keys button {
  flex: 1;
  height: 13px;
  line-height: 11px;
  border: 1px solid transparent;
  border-right-color: var(--line);
  border-bottom-color: var(--line);
}

.keys button[aria-pressed] {
  border-color: var(--line) transparent transparent var(--line);
}

.snaps .screen { margin-right: 8px; }
.screen input { width: 111px; }

/* workspace */

.main {
  display: flex;
  margin-top: 1px;
}

.rail {
  flex: none;
  width: 21px;
  padding: 6px 0 0 2px;
}

.rail .rule {
  display: block;
  width: 13px;
  margin: 4px 1px;
  border-top: 1px solid #ddd;
}

.rail.right {
  width: 18px;
  padding-top: 24px;
}

.view {
  flex: 1;
  min-width: 0;
  padding: 1px 1px 0 1px;
  border: solid var(--line);
  border-width: 2px 1px 2px 2px;
}

.view-tools {
  display: flex;
  gap: 1px;
  width: 277px;
  height: 20px;
  padding-top: 2px;
}

.view-tools .btn {
  flex: 1;
  height: 16px;
}

.canvas {
  position: relative;
  height: 530px;
  background: #000;
  overflow: hidden;
}

.plot-frame {
  position: absolute;
  left: 304px;
  top: 130px;
  width: 689px;
  height: 400px;
  border: 3px solid #fff;
}

.survey-mark {
  position: absolute;
  left: 851px;
  top: 221px;
  width: 32px;
  height: 50px;
}

.north {
  position: absolute;
  left: 1003px;
  top: 443px;
  width: 14px;
  height: 6px;
}

/* windows */

.window {
  position: absolute;
  background: #fff;
}

.window-title {
  display: flex;
  align-items: center;
  height: 21px;
  padding: 0 6px 0 5px;
}

.window-title span {
  flex: 1;
  padding-left: 2px;
}

.window-title button + button { margin-left: 49px; }

fieldset {
  min-width: 0;
  border: 1px solid var(--soft);
  padding: 1px 3px 3px;
}

legend {
  margin-left: -1px;
  padding: 0 2px;
}

.traverse {
  left: 301px;
  top: 25px;
  width: 542px;
  height: 120px;
  padding: 0 4px;
}

.traverse .window-title {
  margin-bottom: 3px;
  color: var(--off);
}

.traverse fieldset { margin-bottom: 2px; }
.traverse .wide legend { margin-left: 1px; }

.network-row,
.block-row,
.filter,
.search-row {
  display: grid;
  align-items: center;
}

.network-row { grid-template-columns: 35px 162px 17px 158px 15px; }
.network-row input { width: 154px; }

.block-row {
  grid-template-columns: 32px 13px 33px 18px 20px 54px 17px 26px 64px 21px 54px 15px;
  padding-left: 1px;
}

.block-row input,
.block-row select { margin-right: 3px; }

.points {
  left: 304px;
  top: 131px;
  width: 541px;
  padding: 0 3px;
  border: 2px solid #000;
  border-top-width: 3px;
}

.points .window-title {
  height: 15px;
  padding: 0 5px 0 1px;
}

.filter {
  grid-template-columns: 32px 81px 49px 33px 37px 64px 19px 82px 17px 47px 11px 43px 8px;
  height: 27px;
  margin-top: 10px;
  padding: 3px 0 0 3px;
  border: 1px solid #e8e8e8;
}

.filter input:not([type="checkbox"]) { margin-right: 3px; }

.steps {
  display: flex;
  gap: 1px;
}

input[type="checkbox"] {
  appearance: none;
  position: relative;
  width: 8px;
  height: 8px;
  border: solid #777;
  border-width: 1px 0 0 1px;
}

input[type="checkbox"]:checked::after {
  content: "";
  position: absolute;
  left: 2px;
  top: 0;
  width: 3px;
  height: 5px;
  border: solid #222;
  border-width: 0 1px 1px 0;
  transform: rotate(40deg);
}

.sheet {
  display: grid;
  grid-template-columns: 1fr 10px;
  margin-top: 2px;
  border: 1px solid var(--line);
  border-top-width: 2px;
}

table {
  width: 100%;
  height: 258px;
  table-layout: fixed;
  border-collapse: collapse;
  line-height: 9px;
}

.c-row { width: 15px; }
.c-point { width: 27px; }
.c-name { width: 73px; }
.c-coord { width: 50px; }
.c-level { width: 26px; }
.c-state { width: 38px; }
.c-purpose { width: 42px; }
.c-type { width: 71px; }
.c-cond { width: 53px; }
.c-desc { width: 66px; }

th,
td {
  padding: 0 0 0 2px;
  font-weight: normal;
  text-align: left;
  white-space: nowrap;
  overflow: hidden;
}

thead th {
  height: 14px;
  border-right: 1px solid var(--line);
  border-bottom: 1px solid var(--line);
}

tbody th {
  padding: 2px 2px 0 0;
  text-align: right;
  vertical-align: top;
  border-right: 1px solid var(--line);
  border-bottom: 1px solid var(--line);
}

tbody td {
  padding-top: 1px;
  vertical-align: top;
  border-right: 1px dotted #e4e4e4;
  border-bottom: 1px dotted #f2f2f2;
}

thead th:last-child,
tbody td:last-child {
  padding-left: 1px;
  border-right: 0;
}

tbody td div {
  height: 11px;
  overflow: hidden;
}

.vscroll {
  display: flex;
  flex-direction: column;
  align-items: center;
  color: #333;
}

.vscroll span {
  width: 9px;
  height: 136px;
  margin-bottom: auto;
  background: #e6e6e6;
}

.hscroll {
  display: flex;
  align-items: center;
  height: 12px;
  color: #333;
}

.hscroll span {
  width: 430px;
  height: 9px;
  margin-right: auto;
  background: #e8e8e8;
}

.searches {
  display: grid;
  grid-template-columns: 1fr 1fr;
  gap: 2px;
  margin-top: 2px;
}

.searches fieldset { padding-bottom: 2px; }
.search-row { grid-template-columns: 17px 45px 1fr 15px 15px; column-gap: 1px; }
.search-row input { margin-right: 4px; }

.points .message {
  display: block;
  width: 100%;
  margin-top: 3px;
}

.actions {
  display: flex;
  justify-content: space-between;
  margin-top: 2px;
  padding: 0 22px 2px 22px;
}

.actions button {
  width: 60px;
  height: 14px;
  border-right: 1px solid var(--line);
  border-bottom: 1px solid var(--line);
}

/* bottom bars */

.tabs {
  display: flex;
  height: 17px;
  padding: 0 18px 0 23px;
  color: #999;
}

.tabs button {
  display: flex;
  align-items: center;
  gap: 1px;
  height: 17px;
  padding: 0 3px 0 1px;
  border-right: 1px solid var(--soft);
}

.tabs .active {
  color: #111;
  font-weight: bold;
  border: solid #333;
  border-width: 0 1px 1px 0;
}

.tab-arrows {
  display: flex;
  align-items: center;
  margin-left: auto;
}

.output {
  margin: 4px 18px 0 20px;
  border-bottom: 1px solid var(--line);
}

.output-title {
  display: flex;
  align-items: center;
  height: 16px;
  padding: 0 0 0 2px;
  border: 1px solid var(--soft);
  border-bottom-color: var(--line);
  margin-bottom: 1px;
}

.output-title span { flex: 1; }

footer { padding: 2px 18px 0 23px; }

.status {
  display: flex;
  align-items: center;
  justify-content: flex-end;
  gap: 2px;
}

.status span {
  height: 13px;
  border: 1px solid var(--soft);
  border-width: 1px 1px 0;
}

.status .progress { width: 259px; }

.tasks {
  width: 94px;
  height: 14px;
  margin-top: 2px;
  padding-left: 2px;
  border: solid var(--soft);
  border-width: 1px 1px 0;
  color: #8c8c8c;
}

/* floating overlays */

.recorder {
  position: absolute;
  top: 0;
  right: 0;
  width: 270px;
  height: 28px;
  display: grid;
  grid-template-columns: 12px 37px 1px 46px 35px 1px 37px 16px 36px 1px 37px;
  align-items: center;
  justify-items: center;
  padding-left: 10px;
  background: #191919;
  border-radius: 0 0 3px 3px;
  color: #ccc;
}

.recorder svg {
  display: block;
  width: 12px;
  height: 12px;
}

.recorder .back {
  width: 11px;
  height: 18px;
  background: #303030;
  border-radius: 2px;
}

.recorder i {
  width: 1px;
  height: 9px;
  background: #444;
}

.recorder time {
  font-size: 9px;
  justify-self: end;
}

.watermark {
  position: absolute;
  right: 42px;
  bottom: 61px;
  display: flex;
  align-items: center;
  gap: 16px;
  opacity: 0.6;
  color: #fff;
  font: bold 27px/38px "Open Sans", sans-serif;
  pointer-events: none;
}

.watermark svg {
  width: 35px;
  height: 38px;
}

.watermark span { padding-top: 8px; }
```
